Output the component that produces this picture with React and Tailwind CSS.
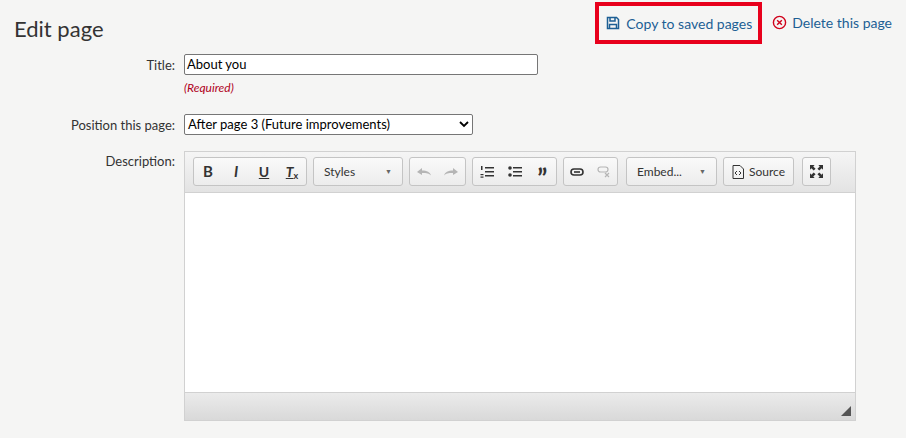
const Btn = ({ children, className = '' }) => (
  <div className={`flex h-[29px] items-center rounded-[3px] border border-[#c4c4c4] bg-gradient-to-b from-[#fafafa] to-[#ececec] ${className}`}>
    {children}
  </div>
);

const Ico = ({ children, dim }) => (
  <span className={`flex h-6 w-7 items-center justify-center ${dim ? 'text-[#b5b5b5]' : 'text-[#333]'}`}>{children}</span>
);

const Drop = ({ label, w }) => (
  <Btn className={`${w} justify-between px-[10px] text-[12px] text-[#333]`}>
    <span>{label}</span>
    <span className="text-[7px] text-[#666]">▼</span>
  </Btn>
);

export default function App() {
  return (
    <div className="relative h-[438px] w-[906px] bg-[#f5f5f4] font-[Lato,sans-serif] text-[#333]">
      <div className="flex items-start justify-between pl-[14px] pr-[14px]">
        <h1 className="mt-[12px] text-[22px] text-[#333]">Edit page</h1>
        <div className="flex items-center gap-[10px] text-[14px] text-[#1d5f94]">
          <div className="mt-[2px] flex h-[42px] items-center border-[4px] border-[#e8001c] px-[6px]">
            <svg width="16" height="16" viewBox="0 0 16 16" fill="none" stroke="#1d5f94" strokeWidth="1.5" className="mr-[5px]">
              <path d="M2.5 2.5h9l2 2v9h-11z" />
              <path d="M5 2.5v3.5h5V2.5" />
              <path d="M4.5 13.5v-4h7v4" />
            </svg>
            Copy to saved pages
          </div>
          <div className="flex items-center">
            <svg width="15" height="15" viewBox="0 0 16 16" fill="none" stroke="#d0021b" strokeWidth="1.5" className="mr-[5px]">
              <circle cx="8" cy="8" r="6.5" />
              <path d="M5.5 5.5l5 5M10.5 5.5l-5 5" />
            </svg>
            Delete this page
          </div>
        </div>
      </div>

      <div className="mt-[9px] grid grid-cols-[175px_1fr] gap-x-[9px] text-[13px]">
        <div className="pt-[2px] text-right">Title:</div>
        <div>
          <div className="flex h-[21px] w-[354px] items-center rounded-[2px] border border-[#767676] bg-white px-[2px] text-[13px] text-black">About you</div>
          <div className="mt-[4px] text-[12px] italic text-[#b0001c]">(Required)</div>
        </div>

        <div className="mt-[17px] pt-[2px] text-right">Position this page:</div>
        <div className="mt-[17px]">
          <div className="flex h-[21px] w-[289px] items-center justify-between rounded-[2px] border border-[#767676] bg-white px-[3px] text-[13px] text-black">
            <span>After page 3 (Future improvements)</span>
            <svg width="10" height="7" viewBox="0 0 10 7"><path d="M1 1l4 4 4-4" stroke="#000" strokeWidth="1.8" fill="none" /></svg>
          </div>
        </div>

        <div className="mt-[15px] pt-[1px] text-right">Description:</div>
        <div className="mt-[15px] w-[672px] border border-[#d1d1d1] bg-white font-['Liberation_Sans',sans-serif]">
          <div className="flex h-[41px] items-center gap-[6px] border-b border-[#d1d1d1] bg-gradient-to-b from-[#f5f5f5] to-[#e3e3e3] px-[8px]">
            <Btn className="w-[114px] justify-center">
              <Ico><b className="text-[15px]">B</b></Ico>
              <Ico><i className="text-[15px] font-bold">I</i></Ico>
              <Ico><u className="text-[14px] font-bold">U</u></Ico>
              <Ico><span className="text-[14px] font-bold italic underline">T<sub className="text-[9px] not-italic">x</sub></span></Ico>
            </Btn>
            <Drop label="Styles" w="w-[90px]" />
            <Btn className="w-[57px] justify-center">
              <Ico dim><svg width="14" height="10" viewBox="0 0 14 10"><path d="M0 5l5-4v2.5c5 0 8 1.5 9 5-2-2-4-2.5-9-2.5V8z" fill="currentColor" /></svg></Ico>
              <Ico dim><svg width="14" height="10" viewBox="0 0 14 10"><path d="M14 5L9 1v2.5c-5 0-8 1.5-9 5 2-2 4-2.5 9-2.5V8z" fill="currentColor" /></svg></Ico>
            </Btn>
            <Btn className="w-[85px] justify-center">
              <Ico><svg width="14" height="14" viewBox="0 0 14 14" fill="currentColor"><rect x="5" y="2" width="9" height="1.5"/><rect x="5" y="6" width="9" height="1.5"/><rect x="5" y="10" width="9" height="1.5"/><rect x="1" y="1" width="1.5" height="4"/><rect x="0.5" y="9" width="3" height="1.2"/><rect x="0.5" y="11.5" width="3" height="1.2"/></svg></Ico>
              <Ico><svg width="14" height="14" viewBox="0 0 14 14" fill="currentColor"><circle cx="2" cy="3" r="1.8"/><circle cx="2" cy="10" r="1.8"/><rect x="5" y="2" width="9" height="1.5"/><rect x="5" y="6" width="9" height="1.5"/><rect x="5" y="10" width="9" height="1.5"/></svg></Ico>
              <Ico><span className="mt-[12px] font-['Liberation_Serif'] text-[26px] font-bold leading-none">”</span></Ico>
            </Btn>
            <Btn className="w-[55px] justify-center">
              <Ico><svg width="14" height="8" viewBox="0 0 14 8" fill="none" stroke="currentColor" strokeWidth="1.6"><rect x="1" y="1" width="12" height="6" rx="3"/><path d="M4 4h6"/></svg></Ico>
              <Ico dim><svg width="14" height="12" viewBox="0 0 14 12" fill="none" stroke="currentColor" strokeWidth="1.2"><rect x="1" y="1" width="10" height="5" rx="2.5"/><path d="M8 7l4 4M12 7l-4 4"/></svg></Ico>
            </Btn>
            <Drop label="Embed..." w="w-[91px] ml-[2px]" />
            <Btn className="w-[71px] justify-center text-[12px]">
              <svg width="12" height="14" viewBox="0 0 12 14" fill="none" stroke="#333" strokeWidth="1" className="mr-[5px]"><path d="M1 .5h7l3.5 3.5v9.5H1z"/><path d="M5 6l-2 2 2 2M7 6l2 2-2 2"/></svg>
              Source
            </Btn>
            <Btn className="ml-[2px] w-[29px] justify-center">
              <svg width="13" height="13" viewBox="0 0 14 14" fill="#333"><path d="M0 0h5L3.5 1.5 6 4 4 6 1.5 3.5 0 5zM14 0v5l-1.5-1.5L10 6 8 4l2.5-2.5L9 0zM0 14V9l1.5 1.5L4 8l2 2-2.5 2.5L5 14zM14 14H9l1.5-1.5L8 10l2-2 2.5 2.5L14 9z"/></svg>
            </Btn>
          </div>
          <div className="h-[199px]" />
          <div className="relative h-[28px] border-t border-[#d1d1d1] bg-gradient-to-b from-[#ebebeb] to-[#d9d9d9]">
            <svg width="10" height="10" viewBox="0 0 10 10" className="absolute bottom-[4px] right-[4px]"><path d="M10 0v10H0z" fill="#555" /></svg>
          </div>
        </div>
      </div>
    </div>
  );
}
